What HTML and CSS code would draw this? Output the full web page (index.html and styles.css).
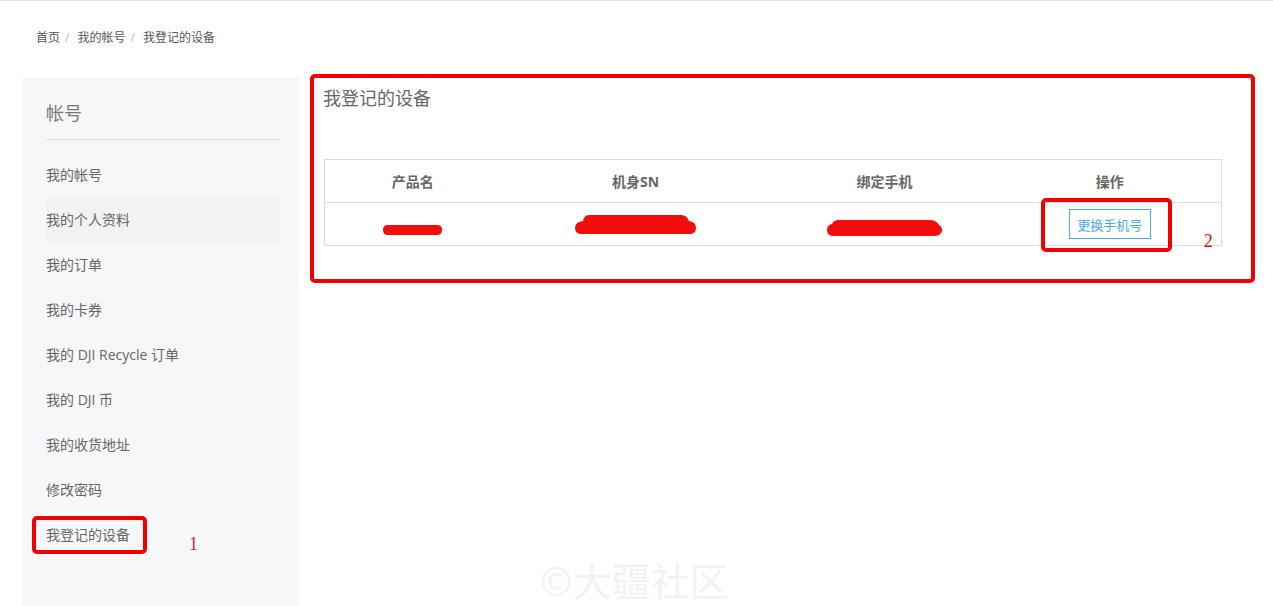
FILE: index.html
```html
<!DOCTYPE html>
<html lang="zh-CN">
<head>
  <meta charset="UTF-8" />
  <title>我登记的设备</title>
  <link rel="stylesheet" href="styles.css">
</head>
<body>
  <div class="top-line"></div>

  <div class="breadcrumb">
    <a href="#">首页</a><span class="sep">/</span>
    <a href="#">我的帐号</a><span class="sep">/</span>
    <span class="current">我登记的设备</span>
  </div>

  <div class="page">
    <div class="sidebar">
      <h3 class="side-title">帐号</h3>
      <ul class="side-menu">
        <li>我的帐号</li>
        <li class="hover">我的个人资料</li>
        <li>我的订单</li>
        <li>我的卡券</li>
        <li>我的 DJI Recycle 订单</li>
        <li>我的 DJI 币</li>
        <li>我的收货地址</li>
        <li>修改密码</li>
        <li class="active">
          我登记的设备
          <span class="mark-box side-mark"></span>
          <span class="mark-num side-num">1</span>
        </li>
      </ul>
    </div>

    <div class="main">
      <span class="mark-box main-mark"></span>
      <h2 class="main-title">我登记的设备</h2>

      <table class="device-table">
        <thead>
          <tr>
            <th class="col-name">产品名</th>
            <th class="col-sn">机身SN</th>
            <th class="col-phone">绑定手机</th>
            <th>操作</th>
          </tr>
        </thead>
        <tbody>
          <tr>
            <td>
              <svg class="blob blob-1" width="60" height="12" viewBox="0 0 60 12"><path d="M5 1 H54 Q59 1 59 6 Q59 11 54 11 H5 Q0 11 0 6 Q0 1 5 1 Z" fill="#f20d0d"/></svg>
            </td>
            <td>
              <svg class="blob blob-2" width="122" height="21" viewBox="0 0 122 21"><path d="M14 1 H106 Q112 1 114 7 Q121 8 121 14 Q121 20 114 20 H7 Q0 20 0 14 Q0 8 8 7 Q9 1 14 1 Z" fill="#f20d0d"/></svg>
            </td>
            <td>
              <svg class="blob blob-3" width="118" height="18" viewBox="0 0 118 18"><path d="M12 1 H104 Q110 1 113 6 Q117 9 116 12 Q115 17 108 17 H8 Q1 17 1 11 Q1 6 6 5 Q8 1 12 1 Z" fill="#f20d0d"/></svg>
            </td>
            <td>
              <span class="btn-wrap">
                <button class="btn-change">更换手机号</button>
                <span class="mark-box btn-mark"></span>
                <span class="mark-num btn-num">2</span>
              </span>
            </td>
          </tr>
        </tbody>
      </table>
    </div>
  </div>

  <div class="watermark">©大疆社区</div>
</body>
</html>
```

FILE: styles.css
```css
* {
  margin: 0;
  padding: 0;
  box-sizing: border-box;
}

body {
  font-family: "Open Sans", "Noto Sans CJK SC", sans-serif;
  color: #555;
  background: #fff;
  height: 606px;
  overflow: hidden;
  position: relative;
}

.top-line {
  height: 2px;
  border-top: 1px solid #e6e6e6;
}

.breadcrumb {
  padding: 0 0 0 36px;
  height: 75px;
  line-height: 72px;
  font-size: 12px;
  color: #555;
}

.breadcrumb a {
  color: #555;
  text-decoration: none;
}

.breadcrumb .sep {
  color: #bbb;
  margin: 0 5px;
}

.page {
  display: flex;
  padding-left: 22px;
}

.sidebar {
  width: 277px;
  min-height: 540px;
  background: #f6f7f9;
  padding: 24px 20px 0 24px;
}

.side-title {
  font-size: 18px;
  font-weight: normal;
  line-height: 24px;
  color: #777;
  padding-bottom: 14px;
  border-bottom: 1px solid #dcdcdc;
}

.side-menu {
  list-style: none;
  margin-top: 12px;
}

.side-menu li {
  height: 45px;
  line-height: 45px;
  font-size: 14px;
  color: #666;
  position: relative;
}

.side-menu li.hover {
  background: #f2f2f2;
}

.mark-box {
  position: absolute;
  border: 4px solid #f20000;
  border-radius: 5px;
  pointer-events: none;
}

.mark-num {
  position: absolute;
  font-family: "Liberation Serif", serif;
  font-size: 18px;
  line-height: 18px;
  color: #e8193c;
}

.side-mark {
  left: -14px;
  top: 4px;
  width: 115px;
  height: 38px;
}

.side-num {
  left: 143px;
  top: 23px;
}

.main {
  flex: 1;
  position: relative;
  padding: 9px 0 0 24px;
}

.main-mark {
  left: 11px;
  top: -3px;
  width: 945px;
  height: 209px;
}

.main-title {
  font-size: 18px;
  font-weight: normal;
  line-height: 24px;
  color: #666;
}

.device-table {
  margin: 49px 0 0 1px;
  width: 898px;
  border-collapse: collapse;
  border: 1px solid #dcdcdc;
  font-size: 14px;
}

.device-table th {
  height: 43px;
  font-weight: bold;
  color: #666;
  text-align: center;
  border-bottom: 1px solid #dcdcdc;
}

.device-table td {
  height: 43px;
  text-align: center;
  vertical-align: middle;
}

.col-name {
  width: 176px;
}

.col-sn {
  width: 270px;
}

.col-phone {
  width: 228px;
}

.blob {
  display: inline-block;
  vertical-align: middle;
  position: relative;
}

.blob-1 {
  top: 4px;
}

.blob-2 {
  top: 0;
}

.blob-3 {
  top: 3px;
}

.btn-wrap {
  position: relative;
  display: inline-block;
  vertical-align: middle;
}

.btn-change {
  display: block;
  width: 82px;
  height: 30px;
  background: #fff;
  border: 1px solid #4aa8ec;
  color: #4aa8ec;
  font-family: "Open Sans", "Noto Sans CJK SC", sans-serif;
  font-size: 13px;
  cursor: pointer;
}

.btn-mark {
  left: -28px;
  top: -11px;
  width: 131px;
  height: 54px;
}

.btn-num {
  left: 135px;
  top: 23px;
  color: #f20000;
}

.watermark {
  position: absolute;
  left: 540px;
  top: 551px;
  font-family: "Noto Sans CJK SC", sans-serif;
  font-size: 39px;
  color: #f4f1f1;
  pointer-events: none;
}
```
